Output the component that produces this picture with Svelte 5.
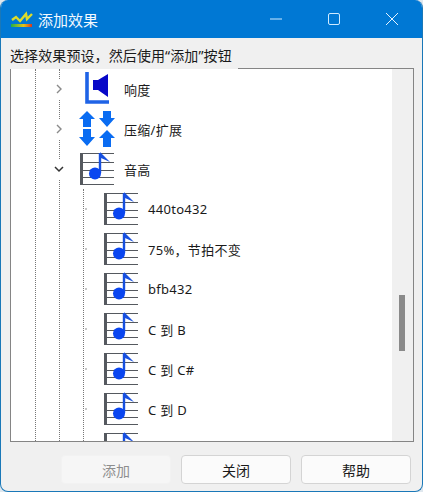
<script lang="ts">
  const presets = ["440to432", "75%，节拍不变", "bfb432", "C 到 B", "C 到 C#", "C 到 D", ""];
</script>

{#snippet noteIcon()}
  <svg class="icon" viewBox="0 0 34 34" width="34" height="34">
    <rect x="0" y="1" width="3" height="32" fill="#55595f" />
    <path d="M0 1.5H34M3 10.5H34M3 18.5H34M3 25.5H34M0 32.5H34" stroke="#55595f" stroke-width="1" fill="none" />
    <path d="M20 1V21" stroke="#1750e0" stroke-width="2.4" fill="none" />
    <path d="M20 0L30 10L21 6Z" fill="#1750e0" />
    <circle cx="15" cy="21.5" r="6" fill="#0a46f0" />
  </svg>
{/snippet}

<div class="window">
  <header class="titlebar">
    <svg class="logo" viewBox="0 0 22 18" width="22" height="18">
      <path d="M1 9L5 6L9 10L15 3L16 8L21 3" stroke="#dcdc2a" stroke-width="2.4" fill="none" />
      <defs>
        <linearGradient id="meter">
          <stop offset="0" stop-color="#22b04a" />
          <stop offset="0.6" stop-color="#e0c418" />
          <stop offset="1" stop-color="#d8341f" />
        </linearGradient>
      </defs>
      <rect x="0" y="13" width="21" height="3" fill="url(#meter)" />
    </svg>
    <span class="title">添加效果</span>
    <div class="controls">
      <svg viewBox="0 0 14 14" width="14" height="14"><path d="M1 7H13" stroke="#cfeaff" stroke-width="1" /></svg>
      <svg viewBox="0 0 14 14" width="14" height="14"><rect x="1.5" y="1.5" width="11" height="11" rx="1.5" stroke="#cfeaff" stroke-width="1" fill="none" /></svg>
      <svg viewBox="0 0 14 14" width="14" height="14"><path d="M1 1L13 13M13 1L1 13" stroke="#e4f3ff" stroke-width="1" /></svg>
    </div>
  </header>

  <main class="content">
    <div class="hint"><span>选择效果预设，然后使用“添加”按钮</span></div>
    <div class="listbox">
      <div class="tree">
        <div class="guide guide-a">
          <div class="guide guide-b">
            <div class="row parent">
              <svg class="chevron" viewBox="0 0 12 12" width="12" height="12"><path d="M4 2L8 6L4 10" stroke="#8a8a8a" stroke-width="1.4" fill="none" /></svg>
              <svg class="icon" viewBox="0 0 34 34" width="34" height="34">
                <path d="M7 0V30H29" stroke="#1f63e6" stroke-width="3.6" fill="none" />
                <path d="M13 8H18L28 2V25L18 18H13Z" fill="#0808c8" />
              </svg>
              <span class="label">响度</span>
            </div>
            <div class="row parent">
              <svg class="chevron" viewBox="0 0 12 12" width="12" height="12"><path d="M4 2L8 6L4 10" stroke="#8a8a8a" stroke-width="1.4" fill="none" /></svg>
              <svg class="icon wide" viewBox="0 0 36 38" width="36" height="38">
                <g fill="#0a6cf2">
                  <path d="M8 1L16 9H12V17H4V9H0Z" />
                  <path d="M8 36L16 27H12V19H4V27H0Z" />
                  <path d="M28 17L36 8H32V1H24V8H20Z" />
                  <path d="M28 20L36 28H32V37H24V28H20Z" />
                </g>
              </svg>
              <span class="label">压缩/扩展</span>
            </div>
            <div class="row parent">
              <svg class="chevron" viewBox="0 0 12 12" width="12" height="12"><path d="M2 4L6 8L10 4" stroke="#333" stroke-width="1.5" fill="none" /></svg>
              {@render noteIcon()}
              <span class="label">音高</span>
            </div>
            <div class="children">
              {#each presets as preset}
                <div class="row child">
                  {@render noteIcon()}
                  <span class="label">{preset}</span>
                </div>
              {/each}
            </div>
          </div>
        </div>
      </div>
      <div class="scrollbar"><div class="thumb"></div></div>
    </div>
    <footer class="actions">
      <button disabled>添加</button>
      <button>关闭</button>
      <button>帮助</button>
    </footer>
  </main>
</div>

<style>
  :global(body) {
    margin: 0;
    background: #dfe7ee;
  }

  .window {
    width: 423px;
    height: 492px;
    box-sizing: border-box;
    display: flex;
    flex-direction: column;
    border: 1px solid #1a78b8;
    border-top: 0;
    border-radius: 8px;
    overflow: hidden;
    background: #f0f0f0;
    font-family: "Noto Sans", "Noto Sans CJK SC", sans-serif;
    font-size: 14px;
    color: #1a1a1a;
  }

  .titlebar {
    height: 38px;
    flex: none;
    display: flex;
    align-items: center;
    padding-left: 10px;
    background: #0078d4;
    color: #f2f9ff;
  }

  .logo {
    margin-right: 5px;
    margin-top: 1px;
  }

  .title {
    font-size: 15px;
  }

  .controls {
    margin-left: auto;
    margin-right: 23px;
    display: flex;
    gap: 44px;
  }

  .content {
    flex: 1;
    display: flex;
    flex-direction: column;
    padding: 0 8px 8px 9px;
    min-height: 0;
  }

  .hint {
    height: 31px;
    flex: none;
    margin: 0 0 -1px;
    position: relative;
    z-index: 1;
    line-height: 36px;
    white-space: nowrap;
  }

  .hint span {
    display: inline-block;
    height: 31px;
    padding-right: 6px;
    background: #f0f0f0;
    letter-spacing: 0.1px;
  }

  .listbox {
    height: 374px;
    flex: none;
    box-sizing: border-box;
    display: flex;
    border: 1px solid #858585;
    background: #fff;
  }

  .tree {
    flex: 1;
    overflow: hidden;
    padding-left: 24px;
    background: #fff;
  }

  .guide {
    border-left: 1px dotted #777;
  }

  .guide-b {
    margin-left: 23px;
  }

  .row {
    height: 40px;
    display: flex;
    align-items: center;
    white-space: nowrap;
  }

  .chevron {
    flex: none;
    margin-left: -7px;
    margin-right: 7px;
    background: #fff;
    padding: 4px 0;
    box-sizing: content-box;
  }

  .row .icon {
    flex: none;
    margin-left: 8px;
  }

  .row .icon.wide {
    margin-left: 7px;
  }

  .label {
    margin-left: 10px;
    font-size: 13px;
    letter-spacing: 0.3px;
  }

  .wide + .label {
    margin-left: 9px;
  }

  .children {
    margin-left: 23px;
    border-left: 1px dotted #777;
  }

  .child {
    padding-left: 12px;
    background: radial-gradient(circle, #888 0.6px, transparent 0.8px) 1px 50% / 2px 2px no-repeat;
  }

  .scrollbar {
    width: 21px;
    flex: none;
    position: relative;
    background: #f0f0f0;
  }

  .thumb {
    position: absolute;
    top: 226px;
    left: 7px;
    width: 6px;
    height: 56px;
    background: #8a8a8a;
  }

  .actions {
    flex: 1;
    display: flex;
    justify-content: flex-end;
    align-items: flex-start;
    gap: 10px;
    padding: 13px 3px 0 0;
  }

  button {
    width: 110px;
    height: 29px;
    box-sizing: border-box;
    border: 1px solid #d4d4d4;
    border-radius: 4px;
    background: #fbfbfb;
    font: inherit;
    font-size: 14px;
    color: #1a1a1a;
    padding: 0;
  }

  button:disabled {
    border-color: #f2f2f2;
    background: #f6f6f6;
    color: #8e8e8e;
  }
</style>
